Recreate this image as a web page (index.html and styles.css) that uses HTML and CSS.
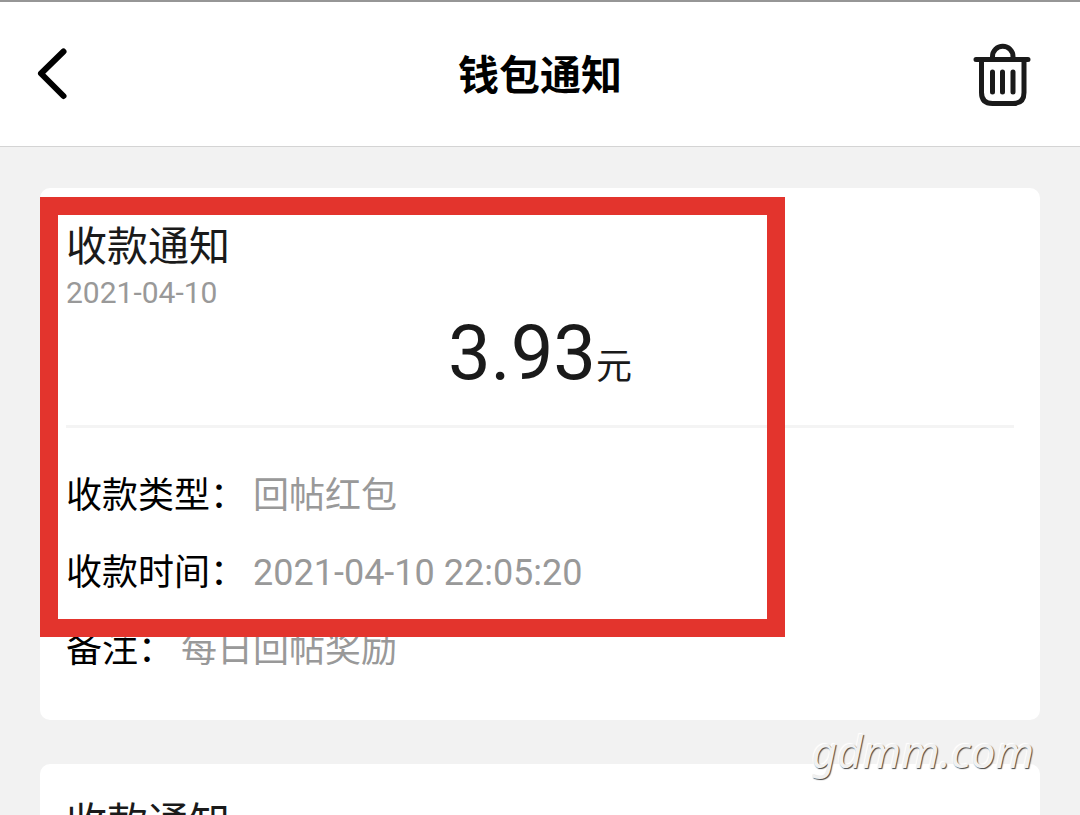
FILE: index.html
```html
<!DOCTYPE html>
<html lang="zh-CN">
<head>
<meta charset="utf-8">
<meta name="viewport" content="width=device-width, initial-scale=1">
<title>钱包通知</title>
<link rel="stylesheet" href="styles.css">
</head>
<body>
<header class="topbar">
  <button class="icon-button" type="button" aria-label="返回">
    <svg class="icon-back" viewBox="0 0 36 60" fill="none" stroke="#000" stroke-width="6" stroke-linecap="round" stroke-linejoin="round"><path d="M27.500 7.500 5 29.500 27.500 52"/></svg>
  </button>
  <h1 class="topbar-title">钱包通知</h1>
  <button class="icon-button icon-button-end" type="button" aria-label="删除">
    <svg class="icon-trash" viewBox="0 0 60 66" fill="none" stroke="#1a1a1a" stroke-width="5" stroke-linecap="round"><path d="M4 18.500H56M20.500 17V15.500a10 10 0 0 1 20.500 0V17"/><path d="M9.500 20V51.500q0 11 11 11H41q11 0 11-11V20"/><path d="M20.500 31V51M30.500 31V51M41 31V51"/></svg>
  </button>
</header>
<main class="notices">
  <article class="card">
    <h2 class="card-title">收款通知</h2>
    <time class="card-date">2021-04-10</time>
    <p class="amount">3.93<span class="unit">元</span></p>
    <dl class="details">
      <div class="row"><dt>收款类型：</dt><dd>回帖红包</dd></div>
      <div class="row"><dt>收款时间：</dt><dd>2021-04-10 22:05:20</dd></div>
      <div class="row"><dt>备注：</dt><dd>每日回帖奖励</dd></div>
    </dl>
    <div class="highlight"></div>
  </article>
  <article class="card">
    <h2 class="card-title">收款通知</h2>
  </article>
</main>
<div class="watermark">gdmm.com</div>
</body>
</html>
```

FILE: styles.css
```css
* {
  box-sizing: border-box;
  margin: 0;
  padding: 0;
}

body {
  position: relative;
  height: 100vh;
  overflow: hidden;
  background: #f2f2f2;
  color: #1a1a1a;
  font-family: Roboto, "Noto Sans CJK SC", sans-serif;
}

.topbar {
  display: grid;
  grid-template-columns: 1fr auto 1fr;
  align-items: center;
  height: 147px;
  padding: 0 36px;
  border-top: 2px solid #969696;
  border-bottom: 1px solid #d4d4d4;
  background: #fff;
}

.topbar-title {
  padding-top: 4px;
  color: #000;
  font-size: 41px;
  line-height: 60px;
  font-weight: 700;
}

.icon-button {
  display: flex;
  align-items: center;
  width: 60px;
  height: 66px;
  border: 0;
  background: none;
}

.icon-button-end {
  justify-self: end;
  margin-right: 12px;
}

.icon-back {
  width: 36px;
  height: 60px;
}

.icon-trash {
  width: 60px;
  height: 66px;
}

.notices {
  display: grid;
  gap: 44px;
  padding: 41px 40px;
}

.card {
  position: relative;
  padding: 35px 26px 31px;
  border-radius: 10px;
  background: #fff;
}

.card-title {
  font-size: 41px;
  line-height: 48px;
  font-weight: 400;
}

.card-date {
  display: block;
  color: #999;
  font-size: 30px;
  line-height: 44px;
}

.amount {
  height: 110px;
  font-size: 76px;
  line-height: 76px;
  text-align: center;
}

.unit {
  font-size: 36px;
}

.details {
  padding-top: 30px;
  border-top: 3px solid #f4f4f4;
}

.row {
  display: flex;
  gap: 7px;
  font-size: 36px;
  line-height: 77px;
}

.row dt {
  color: #000;
}

.row dd {
  color: #999;
}

.highlight {
  position: absolute;
  top: 9px;
  bottom: 83px;
  left: 0;
  width: 74.5%;
  border: 18px solid #e3342d;
}

.watermark {
  position: absolute;
  right: 46px;
  bottom: 36px;
  color: #f1f1f1;
  font: italic 400 44px/56px "Noto Sans", "Open Sans", sans-serif;
  text-shadow: 1px 1px 1px #444, -1px -1px 1px #fff;
}
```
